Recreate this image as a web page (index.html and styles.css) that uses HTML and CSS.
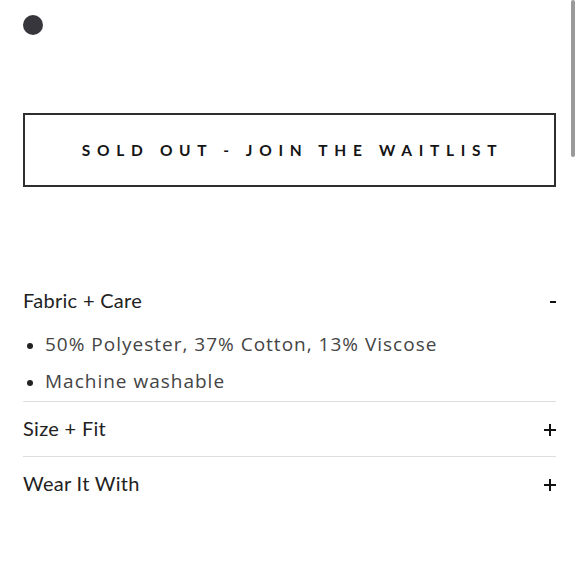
FILE: index.html
```html
<!DOCTYPE html>
<html>
<head>
<meta charset="utf-8">
<link rel="stylesheet" href="styles.css">
</head>
<body>
<div class="page">
  <div class="swatch"></div>
  <button class="waitlist">SOLD OUT - JOIN THE WAITLIST</button>
  <div class="accordion">
    <div class="item open">
      <div class="head"><span class="title">Fabric + Care</span><span class="minus"></span></div>
      <ul class="body">
        <li>50% Polyester, 37% Cotton, 13% Viscose</li>
        <li>Machine washable</li>
      </ul>
    </div>
    <div class="item">
      <div class="head"><span class="title">Size + Fit</span><span class="plus"></span></div>
    </div>
    <div class="item">
      <div class="head"><span class="title">Wear It With</span><span class="plus"></span></div>
    </div>
  </div>
</div>
<div class="scrollbar"></div>
</body>
</html>
```

FILE: styles.css
```css
html, body {
  margin: 0;
  padding: 0;
  background: #fff;
}
.page {
  padding: 15px 24px 0 23px;
  font-family: Lato, "Liberation Sans", sans-serif;
  color: #222;
}
.swatch {
  width: 20px;
  height: 20px;
  border-radius: 50%;
  background: #36363c;
}
.waitlist {
  display: block;
  box-sizing: border-box;
  width: 100%;
  height: 74px;
  margin-top: 78px;
  border: 2px solid #2e2e2e;
  background: #fff;
  font-family: Lato, "Liberation Sans", sans-serif;
  font-weight: 700;
  font-size: 15.5px;
  letter-spacing: 6.7px;
  color: #151515;
  padding: 0 0 0 6px;
}
.accordion {
  margin-top: 98px;
}
.item + .item {
  border-top: 1px solid #dedede;
}
.head {
  display: flex;
  justify-content: space-between;
  align-items: center;
  height: 30px;
  font-size: 20px;
  letter-spacing: 0.3px;
  line-height: 30px;
}
.item + .item .head {
  padding: 11px 0 13px;
}
.title {
  color: #222;
}
.minus {
  width: 6px;
  height: 2px;
  background: #111;
  margin-top: 3px;
}
.plus {
  position: relative;
  width: 12px;
  height: 12px;
  margin-top: 4px;
}
.plus::before, .plus::after {
  content: "";
  position: absolute;
  background: #111;
}
.plus::before {
  left: 0;
  top: 5px;
  width: 12px;
  height: 1.6px;
}
.plus::after {
  left: 5.2px;
  top: 0;
  width: 1.6px;
  height: 12px;
}
.body {
  margin: 11px 0 0;
  padding: 0 0 1px 22px;
  font-family: "Open Sans", sans-serif;
  font-size: 19px;
  letter-spacing: 1px;
  line-height: 37px;
  color: #444;
}
.body li::marker {
  font-size: 16px;
  color: #222;
}
.scrollbar {
  position: fixed;
  top: 0;
  right: 5px;
  width: 4px;
  height: 157px;
  border-radius: 2px;
  background: #9a9a9a;
}
```
